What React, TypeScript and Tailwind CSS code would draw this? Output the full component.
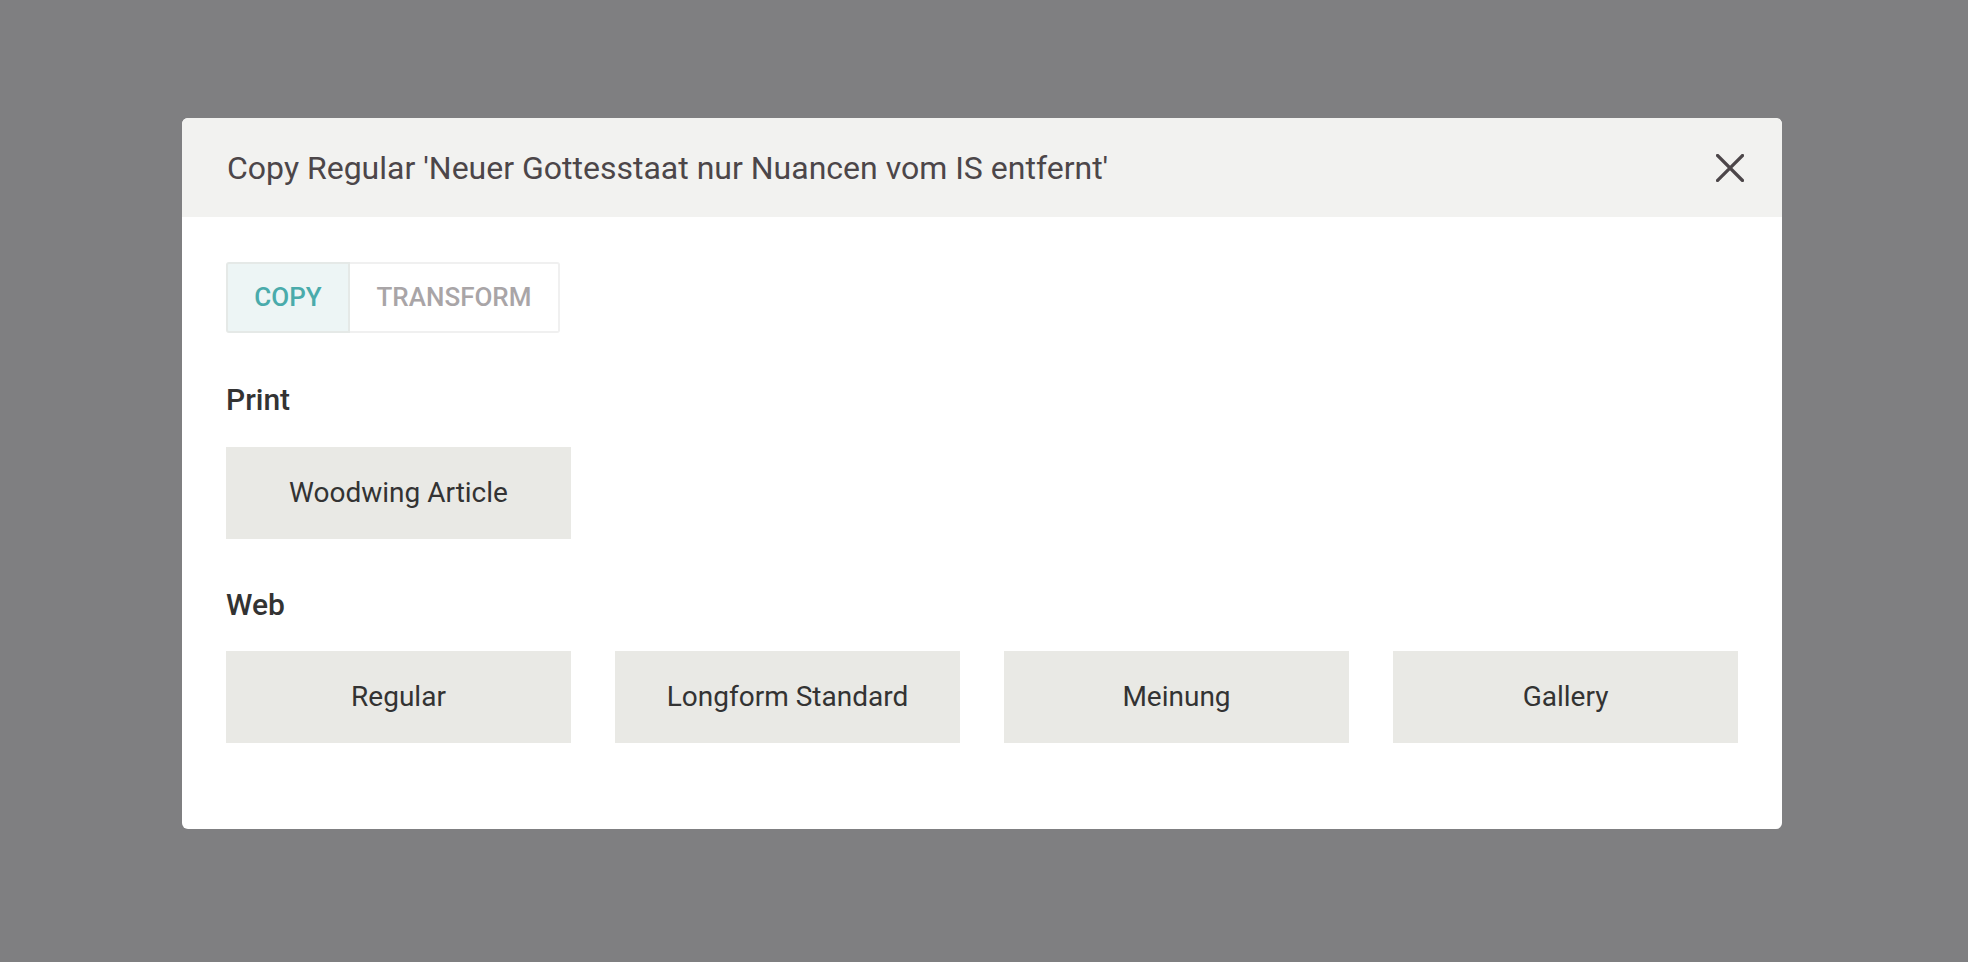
import { useState } from 'react';

const webTypes = ['Regular', 'Longform Standard', 'Meinung', 'Gallery'];

function TypeButton({ label }: { label: string }) {
  return (
    <button className="h-[92px] bg-[#e9e9e5] text-[28px] text-[#333333] flex items-center justify-center">
      {label}
    </button>
  );
}

export default function App() {
  const [tab, setTab] = useState<'copy' | 'transform'>('copy');

  return (
    <div
      className="w-full h-[962px] bg-[#7f7f81] pl-[182px] pt-[118px]"
      style={{ fontFamily: 'Roboto, "Noto Sans", sans-serif' }}
    >
      <div className="w-[1600px] h-[711px] bg-white rounded-[6px] overflow-hidden flex flex-col">
        {/* Header */}
        <div className="h-[99px] bg-[#f2f2f0] flex items-center justify-between pl-[45px] pr-[32px]">
          <h1 className="text-[32px] text-[#4c4649]">
            Copy Regular 'Neuer Gottesstaat nur Nuancen vom IS entfernt'
          </h1>
          <button className="w-[40px] h-[40px] flex items-center justify-center" aria-label="Close">
            <svg width="28" height="28" viewBox="0 0 28 28" fill="none">
              <path d="M1.5 1.5 L26.5 26.5 M26.5 1.5 L1.5 26.5" stroke="#4c4649" strokeWidth="3.2" strokeLinecap="square" />
            </svg>
          </button>
        </div>

        {/* Body */}
        <div className="px-[44px] pt-[45px]">
          <div className="flex">
            <button
              onClick={() => setTab('copy')}
              className={`h-[71px] w-[124px] text-[26px] font-medium border-2 rounded-l-[3px] ${
                tab === 'copy'
                  ? 'bg-[#edf5f5] text-[#4aabab] border-[#e5e9e7]'
                  : 'bg-white text-[#a9a5a7] border-[#f0f0f0]'
              }`}
            >
              COPY
            </button>
            <button
              onClick={() => setTab('transform')}
              className={`h-[71px] w-[210px] text-[26px] font-medium border-2 border-l-0 rounded-r-[3px] ${
                tab === 'transform'
                  ? 'bg-[#edf5f5] text-[#4aabab] border-[#e5e9e7]'
                  : 'bg-white text-[#a9a5a7] border-[#f0f0f0]'
              }`}
            >
              TRANSFORM
            </button>
          </div>

          <h2 className="mt-[50px] text-[30px] font-medium text-[#333333] leading-[34px]">Print</h2>
          <div className="mt-[30px] grid grid-cols-4 gap-[44px]">
            <TypeButton label="Woodwing Article" />
          </div>

          <h2 className="mt-[49px] text-[30px] font-medium text-[#333333] leading-[34px]">Web</h2>
          <div className="mt-[29px] grid grid-cols-4 gap-[44px]">
            {webTypes.map((t) => (
              <TypeButton key={t} label={t} />
            ))}
          </div>
        </div>
      </div>
    </div>
  );
}
